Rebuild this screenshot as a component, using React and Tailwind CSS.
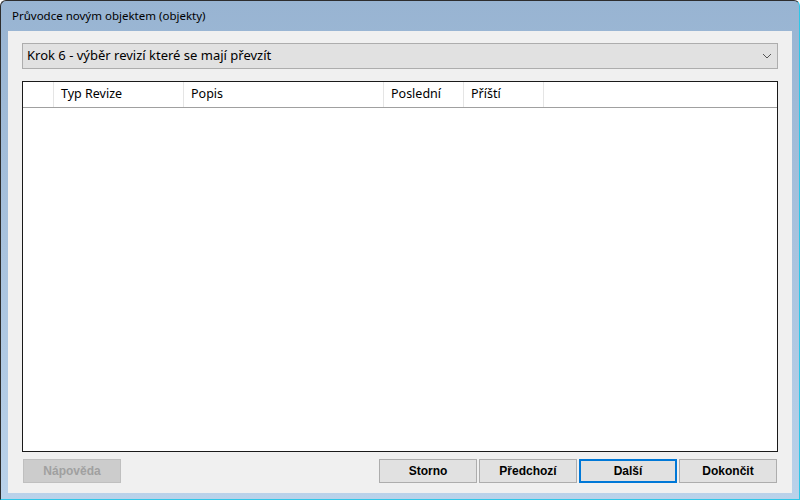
export default function App() {
  const ui = { fontFamily: '"Noto Sans", "Open Sans", sans-serif' };
  const btn = { fontFamily: '"Liberation Sans", Arial, sans-serif' };

  return (
    <div className="w-[800px] h-[500px] bg-white">
      <div className="w-[800px] h-[500px] flex flex-col rounded-t-[6px] border border-[#2d2d2d] border-r-[#2ec7e8] border-b-[#2ec7e8] bg-gradient-to-b from-[#98b4d2] to-[#bad2ea] overflow-hidden">
        {/* title bar */}
        <div className="h-[30px] flex items-center pl-[11px] text-[11.5px] text-black" style={ui}>
          Průvodce novým objektem (objekty)
        </div>

        {/* client */}
        <div className="mx-[7px] mb-[6px] flex-1 bg-[#f0f0f0] flex flex-col px-[14px] pt-[12px] pb-[10px]">
          {/* combo */}
          <div className="h-[26px] flex items-center justify-between bg-[#e1e1e1] border border-[#adadad] pl-[4px] pr-[5px]">
            <span className="text-[13px] text-black" style={ui}>Krok 6 - výběr revizí které se mají převzít</span>
            <svg width="10" height="6" viewBox="0 0 10 6">
              <path d="M1 1 L5 5 L9 1" fill="none" stroke="#555" strokeWidth="1" />
            </svg>
          </div>

          {/* table */}
          <div className="mt-[12px] flex-1 bg-white border border-[#1a1a1a] flex flex-col">
            <div className="h-[26px] flex border-b border-[#a0a0a0] text-[12.5px] text-black" style={ui}>
              <div className="w-[31px] border-r border-[#e5e5e5]" />
              <div className="w-[130px] border-r border-[#e5e5e5] pl-[7px] flex items-center">Typ Revize</div>
              <div className="w-[200px] border-r border-[#e5e5e5] pl-[7px] flex items-center">Popis</div>
              <div className="w-[80px] border-r border-[#e5e5e5] pl-[7px] flex items-center">Poslední</div>
              <div className="w-[80px] border-r border-[#e5e5e5] pl-[7px] flex items-center">Příští</div>
              <div className="flex-1" />
            </div>
          </div>

          {/* buttons */}
          <div className="mt-[7px] flex items-center text-[12px] font-bold" style={btn}>
            <div className="w-[98px] h-[24px] ml-[1px] flex items-center justify-center bg-[#cccccc] border border-[#bfbfbf] text-[#a0a0a0]">
              Nápověda
            </div>
            <div className="flex-1" />
            <div className="flex gap-[2px] mr-[1px]">
              <div className="w-[98px] h-[24px] flex items-center justify-center bg-[#e1e1e1] border border-[#adadad] text-black">Storno</div>
              <div className="w-[98px] h-[24px] flex items-center justify-center bg-[#e1e1e1] border border-[#adadad] text-black">Předchozí</div>
              <div className="w-[98px] h-[24px] flex items-center justify-center bg-[#e1e1e1] border-2 border-[#0078d7] text-black">Další</div>
              <div className="w-[98px] h-[24px] flex items-center justify-center bg-[#e1e1e1] border border-[#adadad] text-black">Dokončit</div>
            </div>
          </div>
        </div>
      </div>
    </div>
  );
}
